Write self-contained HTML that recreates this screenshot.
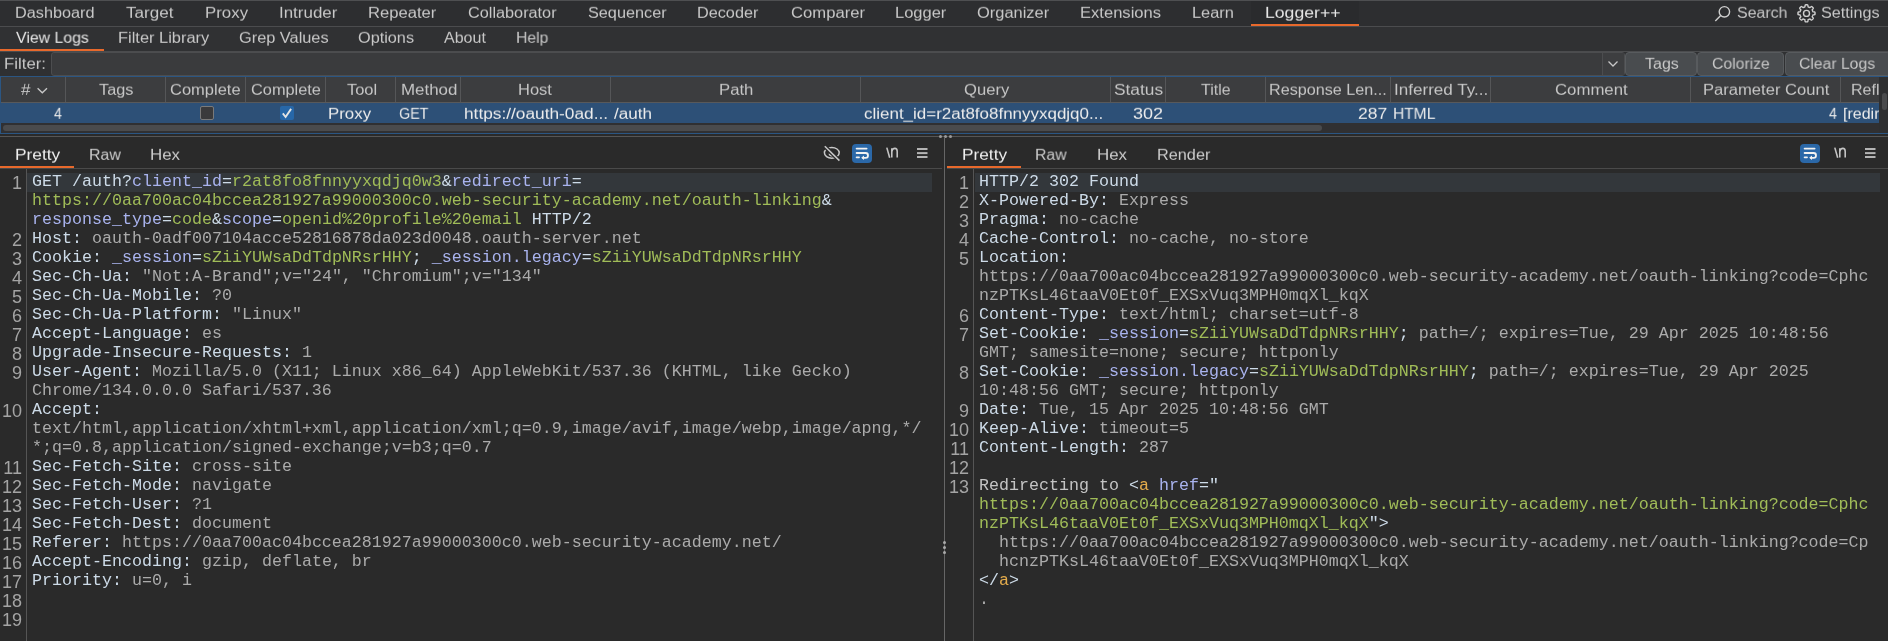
<!DOCTYPE html>
<html><head><meta charset="utf-8">
<style>
*{margin:0;padding:0;box-sizing:border-box}
html,body{width:1888px;height:641px;overflow:hidden;background:#2a2a2a}
body{position:relative;font-family:"Liberation Sans",sans-serif}
.a{position:absolute}
.t{position:absolute;white-space:pre;transform-origin:0 0;will-change:transform;font-family:"Liberation Sans",sans-serif}
pre{position:absolute;will-change:transform;font-family:"Liberation Mono",monospace;font-size:16.6667px;line-height:19px;white-space:pre;top:172px}
pre.ln{width:22px;text-align:right;color:#a4a4a4;font-family:"Liberation Sans",sans-serif;font-size:18px;top:173.6px}
</style></head><body>
<!-- top bar -->
<div class="a" style="left:0;top:0;width:1888px;height:1px;background:#4e4f51"></div>
<div class="a" style="left:0;top:1px;width:1888px;height:25px;background:#2d2e30"></div>
<div class="a" style="left:1251px;top:1px;width:108px;height:25px;background:#2a2b2d"></div>
<div class="a" style="left:1251px;top:24px;width:108px;height:2px;background:#e8692c"></div>
<div class="a" style="left:0;top:26px;width:1888px;height:1px;background:#4b4c4e"></div>
<!-- second bar -->
<div class="a" style="left:0;top:27px;width:1888px;height:24px;background:#303133"></div>
<div class="a" style="left:0;top:49px;width:104px;height:2px;background:#e8692c"></div>
<div class="a" style="left:0;top:51px;width:1888px;height:1px;background:#4b4c4e"></div>
<!-- filter row -->
<div class="a" style="left:0;top:52px;width:1888px;height:24px;background:#2f3032"></div>
<div class="a" style="left:51px;top:52px;width:1574px;height:24px;background:#3a3b3d;border:1px solid #4c4d4f;border-radius:3px"></div>
<div class="a" style="left:1602px;top:53px;width:1px;height:22px;background:#4c4d4f"></div>
<div class="a" style="left:1603px;top:53px;width:21px;height:22px;background:#3d3e40"></div>
<svg class="a" style="left:1606px;top:59px" width="14" height="10" viewBox="0 0 14 10"><path d="M2.5 2.5 L7 7 L11.5 2.5" fill="none" stroke="#c8c8c8" stroke-width="1.3"/></svg>
<div class="a" style="left:1625px;top:52px;width:72px;height:24px;background:#494c4f;border:1px solid #585b5e;border-radius:4px"></div>
<div class="a" style="left:1697px;top:52px;width:87px;height:24px;background:#494c4f;border:1px solid #585b5e;border-radius:4px"></div>
<div class="a" style="left:1785px;top:52px;width:106px;height:24px;background:#494c4f;border:1px solid #585b5e;border-radius:4px"></div>
<!-- table -->
<div class="a" style="left:0;top:76px;width:1888px;height:58px;background:#303032;border:1px solid #2b5683;border-right:none"></div>
<div class="a" style="left:1px;top:77px;width:1878px;height:25px;background:#3c3d3f"></div>
<div class="a" style="left:1px;top:102px;width:1878px;height:1px;background:#58595b"></div>
<div class="a" style="left:65px;top:77px;width:1px;height:25px;background:#555658"></div><div class="a" style="left:165px;top:77px;width:1px;height:25px;background:#555658"></div><div class="a" style="left:245px;top:77px;width:1px;height:25px;background:#555658"></div><div class="a" style="left:325px;top:77px;width:1px;height:25px;background:#555658"></div><div class="a" style="left:395px;top:77px;width:1px;height:25px;background:#555658"></div><div class="a" style="left:460px;top:77px;width:1px;height:25px;background:#555658"></div><div class="a" style="left:610px;top:77px;width:1px;height:25px;background:#555658"></div><div class="a" style="left:860px;top:77px;width:1px;height:25px;background:#555658"></div><div class="a" style="left:1110px;top:77px;width:1px;height:25px;background:#555658"></div><div class="a" style="left:1165px;top:77px;width:1px;height:25px;background:#555658"></div><div class="a" style="left:1265px;top:77px;width:1px;height:25px;background:#555658"></div><div class="a" style="left:1390px;top:77px;width:1px;height:25px;background:#555658"></div><div class="a" style="left:1490px;top:77px;width:1px;height:25px;background:#555658"></div><div class="a" style="left:1690px;top:77px;width:1px;height:25px;background:#555658"></div><div class="a" style="left:1840px;top:77px;width:1px;height:25px;background:#555658"></div>
<svg class="a" style="left:36px;top:85px" width="13" height="10" viewBox="0 0 13 10"><path d="M1.6 3.2 L6.3 7.8 L11 3.2" fill="none" stroke="#c8c8c8" stroke-width="1.3"/></svg>
<div class="a" style="left:0;top:103px;width:1879px;height:20px;background:#2d5077"></div>
<div class="a" style="left:200px;top:106px;width:14px;height:14px;background:#3a3a3c;border:1px solid #7a7a7a;border-radius:2px"></div>
<div class="a" style="left:280px;top:106px;width:14px;height:14px;background:#2767a8;border-radius:2px"></div>
<svg class="a" style="left:280px;top:106px" width="14" height="14" viewBox="0 0 14 14"><path d="M2.8 7.4 L5.6 11 L11.1 2.9" fill="none" stroke="#e4e4e4" stroke-width="1.9"/></svg>
<div class="a" style="left:3px;top:125px;width:1319px;height:6px;background:#4a4b4d;border-radius:3px"></div>
<div class="a" style="left:1879px;top:77px;width:9px;height:56px;background:#2e2f31"></div>
<div class="a" style="left:1882px;top:93px;width:5px;height:17px;background:#4a4b4d;border-radius:3px"></div>
<!-- row clip for Refl / [redi -->
<div class="t" style="left:14.88px;top:3.80px;color:#c8c8c8;font-size:16px;line-height:20px;transform:scale(1.0160,0.92)">Dashboard</div>
<div class="t" style="left:126.00px;top:3.80px;color:#c8c8c8;font-size:16px;line-height:20px;transform:scale(1.0666,0.92)">Target</div>
<div class="t" style="left:204.95px;top:3.80px;color:#c8c8c8;font-size:16px;line-height:20px;transform:scale(1.0527,0.92)">Proxy</div>
<div class="t" style="left:278.94px;top:3.80px;color:#c8c8c8;font-size:16px;line-height:20px;transform:scale(1.0585,0.92)">Intruder</div>
<div class="t" style="left:367.96px;top:3.80px;color:#c8c8c8;font-size:16px;line-height:20px;transform:scale(1.0385,0.92)">Repeater</div>
<div class="t" style="left:467.84px;top:3.80px;color:#c8c8c8;font-size:16px;line-height:20px;transform:scale(1.0162,0.92)">Collaborator</div>
<div class="t" style="left:587.66px;top:3.80px;color:#c8c8c8;font-size:16px;line-height:20px;transform:scale(1.0153,0.92)">Sequencer</div>
<div class="t" style="left:697.17px;top:3.80px;color:#c8c8c8;font-size:16px;line-height:20px;transform:scale(1.0142,0.92)">Decoder</div>
<div class="t" style="left:790.92px;top:3.80px;color:#c8c8c8;font-size:16px;line-height:20px;transform:scale(1.0400,0.92)">Comparer</div>
<div class="t" style="left:894.79px;top:3.80px;color:#c8c8c8;font-size:16px;line-height:20px;transform:scale(1.0309,0.92)">Logger</div>
<div class="t" style="left:977.38px;top:3.80px;color:#c8c8c8;font-size:16px;line-height:20px;transform:scale(1.0272,0.92)">Organizer</div>
<div class="t" style="left:1079.96px;top:3.80px;color:#c8c8c8;font-size:16px;line-height:20px;transform:scale(1.0354,0.92)">Extensions</div>
<div class="t" style="left:1191.97px;top:3.80px;color:#c8c8c8;font-size:16px;line-height:20px;transform:scale(1.0252,0.92)">Learn</div>
<div class="t" style="left:1264.90px;top:3.80px;color:#e6e6e6;font-size:16px;line-height:20px;transform:scale(1.1018,0.92)">Logger++</div>
<div class="t" style="left:1736.50px;top:3.80px;color:#c8c8c8;font-size:16px;line-height:20px;transform:scale(0.9940,0.92)">Search</div>
<div class="t" style="left:1820.50px;top:3.80px;color:#c8c8c8;font-size:16px;line-height:20px;transform:scale(1.0119,0.92)">Settings</div>
<div class="t" style="left:15.72px;top:28.70px;color:#e6e6e6;font-size:16px;line-height:20px;transform:scale(0.9901,0.92)">View Logs</div>
<div class="t" style="left:118.33px;top:28.70px;color:#c8c8c8;font-size:16px;line-height:20px;transform:scale(1.0261,0.92)">Filter Library</div>
<div class="t" style="left:238.56px;top:28.70px;color:#c8c8c8;font-size:16px;line-height:20px;transform:scale(1.0213,0.92)">Grep Values</div>
<div class="t" style="left:357.56px;top:28.70px;color:#c8c8c8;font-size:16px;line-height:20px;transform:scale(1.0159,0.92)">Options</div>
<div class="t" style="left:443.64px;top:28.70px;color:#c8c8c8;font-size:16px;line-height:20px;transform:scale(1.0008,0.92)">About</div>
<div class="t" style="left:516.02px;top:28.70px;color:#c8c8c8;font-size:16px;line-height:20px;transform:scale(0.9811,0.92)">Help</div>
<div class="t" style="left:4.49px;top:55.00px;color:#c8c8c8;font-size:16px;line-height:20px;transform:scale(1.0492,0.92)">Filter:</div>
<div class="t" style="left:1644.54px;top:54.90px;color:#c8c8c8;font-size:16px;line-height:20px;transform:scale(1.0001,0.92)">Tags</div>
<div class="t" style="left:1711.92px;top:54.90px;color:#c8c8c8;font-size:16px;line-height:20px;transform:scale(0.9843,0.92)">Colorize</div>
<div class="t" style="left:1798.92px;top:54.90px;color:#c8c8c8;font-size:16px;line-height:20px;transform:scale(0.9824,0.92)">Clear Logs</div>
<div class="t" style="left:21.20px;top:81.00px;color:#c6c6c6;font-size:16px;line-height:20px;transform:scale(1.0667,0.92)">#</div>
<div class="t" style="left:99.36px;top:81.00px;color:#c6c6c6;font-size:16px;line-height:20px;transform:scale(1.0179,0.92)">Tags</div>
<div class="t" style="left:170.30px;top:81.00px;color:#c6c6c6;font-size:16px;line-height:20px;transform:scale(1.0302,0.92)">Complete</div>
<div class="t" style="left:250.66px;top:81.00px;color:#c6c6c6;font-size:16px;line-height:20px;transform:scale(1.0212,0.92)">Complete</div>
<div class="t" style="left:346.54px;top:81.00px;color:#c6c6c6;font-size:16px;line-height:20px;transform:scale(1.0280,0.92)">Tool</div>
<div class="t" style="left:400.66px;top:81.00px;color:#c6c6c6;font-size:16px;line-height:20px;transform:scale(1.0570,0.92)">Method</div>
<div class="t" style="left:518.33px;top:81.00px;color:#c6c6c6;font-size:16px;line-height:20px;transform:scale(1.0296,0.92)">Host</div>
<div class="t" style="left:719.32px;top:81.00px;color:#c6c6c6;font-size:16px;line-height:20px;transform:scale(1.0447,0.92)">Path</div>
<div class="t" style="left:963.56px;top:81.00px;color:#c6c6c6;font-size:16px;line-height:20px;transform:scale(1.0380,0.92)">Query</div>
<div class="t" style="left:1113.56px;top:81.00px;color:#c6c6c6;font-size:16px;line-height:20px;transform:scale(1.0813,0.92)">Status</div>
<div class="t" style="left:1201.00px;top:81.00px;color:#c6c6c6;font-size:16px;line-height:20px;transform:scale(0.9956,0.92)">Title</div>
<div class="t" style="left:1268.63px;top:81.00px;color:#c6c6c6;font-size:16px;line-height:20px;transform:scale(1.0098,0.92)">Response Len...</div>
<div class="t" style="left:1394.47px;top:81.00px;color:#c6c6c6;font-size:16px;line-height:20px;transform:scale(1.0676,0.92)">Inferred Ty...</div>
<div class="t" style="left:1554.92px;top:81.00px;color:#c6c6c6;font-size:16px;line-height:20px;transform:scale(1.0476,0.92)">Comment</div>
<div class="t" style="left:1702.50px;top:81.00px;color:#c6c6c6;font-size:16px;line-height:20px;transform:scale(1.0364,0.92)">Parameter Count</div>
<div class="t" style="left:53.82px;top:104.50px;color:#ececec;font-size:16px;line-height:20px;transform:scale(0.8889,0.92)">4</div>
<div class="t" style="left:328.49px;top:104.50px;color:#ececec;font-size:16px;line-height:20px;transform:scale(1.0528,0.92)">Proxy</div>
<div class="t" style="left:398.66px;top:104.50px;color:#ececec;font-size:16px;line-height:20px;transform:scale(0.8945,0.92)">GET</div>
<div class="t" style="left:463.64px;top:104.50px;color:#ececec;font-size:16px;line-height:20px;transform:scale(1.0796,0.92)">https://oauth-0ad...</div>
<div class="t" style="left:614.00px;top:104.50px;color:#ececec;font-size:16px;line-height:20px;transform:scale(1.0669,0.92)">/auth</div>
<div class="t" style="left:864.28px;top:104.50px;color:#ececec;font-size:16px;line-height:20px;transform:scale(1.0605,0.92)">client_id=r2at8fo8fnnyyxqdjq0...</div>
<div class="t" style="left:1132.66px;top:104.50px;color:#ececec;font-size:16px;line-height:20px;transform:scale(1.1253,0.92)">302</div>
<div class="t" style="left:1357.84px;top:104.50px;color:#ececec;font-size:16px;line-height:20px;transform:scale(1.0934,0.92)">287</div>
<div class="t" style="left:1392.85px;top:104.50px;color:#ececec;font-size:16px;line-height:20px;transform:scale(0.9708,0.92)">HTML</div>
<div class="t" style="left:1829.00px;top:104.50px;color:#ececec;font-size:16px;line-height:20px;transform:scale(0.8889,0.92)">4</div>
<div class="t" style="left:14.64px;top:146.20px;color:#f0f0f0;font-size:16px;line-height:20px;transform:scale(1.0838,0.92)">Pretty</div>
<div class="t" style="left:88.73px;top:146.20px;color:#cccccc;font-size:16px;line-height:20px;transform:scale(0.9923,0.92)">Raw</div>
<div class="t" style="left:149.94px;top:146.20px;color:#cccccc;font-size:16px;line-height:20px;transform:scale(1.0563,0.92)">Hex</div>
<div class="t" style="left:961.82px;top:146.20px;color:#f0f0f0;font-size:16px;line-height:20px;transform:scale(1.0789,0.92)">Pretty</div>
<div class="t" style="left:1035.01px;top:146.20px;color:#cccccc;font-size:16px;line-height:20px;transform:scale(0.9856,0.92)">Raw</div>
<div class="t" style="left:1096.94px;top:146.20px;color:#cccccc;font-size:16px;line-height:20px;transform:scale(1.0563,0.92)">Hex</div>
<div class="t" style="left:1156.98px;top:146.20px;color:#cccccc;font-size:16px;line-height:20px;transform:scale(1.0167,0.92)">Render</div>
<div class="a" style="left:1844px;top:103px;width:35px;height:20px;overflow:hidden"><div class="t" style="left:-1px;top:1.5px;color:#ececec;font-size:16px;line-height:20px;transform:scale(1,0.92)">[redirect</div></div>
<div class="a" style="left:1852px;top:77px;width:27px;height:25px;overflow:hidden"><div class="t" style="left:-1.3px;top:4px;color:#c6c6c6;font-size:16px;line-height:20px;transform:scale(1,0.92)">Reflections</div></div>
<!-- splitter -->
<div class="a" style="left:0;top:136px;width:1888px;height:1px;background:#565656"></div>
<div class="a" style="left:939px;top:135px;width:3px;height:3px;border-radius:2px;background:#9a9a9a"></div>
<div class="a" style="left:944px;top:135px;width:3px;height:3px;border-radius:2px;background:#9a9a9a"></div>
<div class="a" style="left:949px;top:135px;width:3px;height:3px;border-radius:2px;background:#9a9a9a"></div>
<div class="a" style="left:944px;top:137px;width:1px;height:504px;background:#666"></div>
<div class="a" style="left:943px;top:541px;width:3px;height:3px;border-radius:2px;background:#aaa"></div>
<div class="a" style="left:943px;top:546px;width:3px;height:3px;border-radius:2px;background:#aaa"></div>
<div class="a" style="left:943px;top:551px;width:3px;height:3px;border-radius:2px;background:#aaa"></div>
<!-- left editor -->
<div class="a" style="left:0;top:166px;width:74px;height:2px;background:#e8692c"></div>
<div class="a" style="left:0;top:168px;width:942px;height:1px;background:#4a4a4a"></div>
<div class="a" style="left:26px;top:169px;width:1px;height:472px;background:#555"></div>
<div class="a" style="left:27px;top:173px;width:905px;height:19px;background:#33373b"></div>
<!-- right editor -->
<div class="a" style="left:947px;top:166px;width:74px;height:2px;background:#e8692c"></div>
<div class="a" style="left:947px;top:168px;width:941px;height:1px;background:#4a4a4a"></div>
<div class="a" style="left:973px;top:169px;width:1px;height:472px;background:#555"></div>
<div class="a" style="left:975px;top:173px;width:905px;height:19px;background:#33373b"></div>
<pre class="ln" style="left:0px">1


2
3
4
5
6
7
8
9

10


11
12
13
14
15
16
17
18
19</pre><pre class="code" style="left:32px"><span style="color:#cddbe8">GET /auth?</span><span style="color:#a9b3ee">client_id</span><span style="color:#cddbe8">=</span><span style="color:#a0bc58">r2at8fo8fnnyyxqdjq0w3</span><span style="color:#cddbe8">&amp;</span><span style="color:#a9b3ee">redirect_uri</span><span style="color:#cddbe8">=</span>
<span style="color:#a0bc58">https://0aa700ac04bccea281927a99000300c0.web-security-academy.net/oauth-linking</span><span style="color:#cddbe8">&amp;</span>
<span style="color:#a9b3ee">response_type</span><span style="color:#cddbe8">=</span><span style="color:#a0bc58">code</span><span style="color:#cddbe8">&amp;</span><span style="color:#a9b3ee">scope</span><span style="color:#cddbe8">=</span><span style="color:#a0bc58">openid%20profile%20email</span><span style="color:#cddbe8"> HTTP/2</span>
<span style="color:#cddbe8">Host:</span><span style="color:#ababab"> oauth-0adf007104acce52816878da023d0048.oauth-server.net</span>
<span style="color:#cddbe8">Cookie:</span><span style="color:#ababab"> </span><span style="color:#a9b3ee">_session</span><span style="color:#cddbe8">=</span><span style="color:#a0bc58">sZiiYUWsaDdTdpNRsrHHY</span><span style="color:#cddbe8">; </span><span style="color:#a9b3ee">_session.legacy</span><span style="color:#cddbe8">=</span><span style="color:#a0bc58">sZiiYUWsaDdTdpNRsrHHY</span>
<span style="color:#cddbe8">Sec-Ch-Ua:</span><span style="color:#ababab"> &quot;Not:A-Brand&quot;;v=&quot;24&quot;, &quot;Chromium&quot;;v=&quot;134&quot;</span>
<span style="color:#cddbe8">Sec-Ch-Ua-Mobile:</span><span style="color:#ababab"> ?0</span>
<span style="color:#cddbe8">Sec-Ch-Ua-Platform:</span><span style="color:#ababab"> &quot;Linux&quot;</span>
<span style="color:#cddbe8">Accept-Language:</span><span style="color:#ababab"> es</span>
<span style="color:#cddbe8">Upgrade-Insecure-Requests:</span><span style="color:#ababab"> 1</span>
<span style="color:#cddbe8">User-Agent:</span><span style="color:#ababab"> Mozilla/5.0 (X11; Linux x86_64) AppleWebKit/537.36 (KHTML, like Gecko)</span>
<span style="color:#ababab">Chrome/134.0.0.0 Safari/537.36</span>
<span style="color:#cddbe8">Accept:</span>
<span style="color:#ababab">text/html,application/xhtml+xml,application/xml;q=0.9,image/avif,image/webp,image/apng,*/</span>
<span style="color:#ababab">*;q=0.8,application/signed-exchange;v=b3;q=0.7</span>
<span style="color:#cddbe8">Sec-Fetch-Site:</span><span style="color:#ababab"> cross-site</span>
<span style="color:#cddbe8">Sec-Fetch-Mode:</span><span style="color:#ababab"> navigate</span>
<span style="color:#cddbe8">Sec-Fetch-User:</span><span style="color:#ababab"> ?1</span>
<span style="color:#cddbe8">Sec-Fetch-Dest:</span><span style="color:#ababab"> document</span>
<span style="color:#cddbe8">Referer:</span><span style="color:#ababab"> https://0aa700ac04bccea281927a99000300c0.web-security-academy.net/</span>
<span style="color:#cddbe8">Accept-Encoding:</span><span style="color:#ababab"> gzip, deflate, br</span>
<span style="color:#cddbe8">Priority:</span><span style="color:#ababab"> u=0, i</span>

</pre>
<pre class="ln" style="left:947px">1
2
3
4
5


6
7

8

9
10
11
12
13





</pre><pre class="code" style="left:979px"><span style="color:#cddbe8">HTTP/2 302 Found</span>
<span style="color:#cddbe8">X-Powered-By:</span><span style="color:#ababab"> Express</span>
<span style="color:#cddbe8">Pragma:</span><span style="color:#ababab"> no-cache</span>
<span style="color:#cddbe8">Cache-Control:</span><span style="color:#ababab"> no-cache, no-store</span>
<span style="color:#cddbe8">Location:</span>
<span style="color:#ababab">https://0aa700ac04bccea281927a99000300c0.web-security-academy.net/oauth-linking?code=Cphc</span>
<span style="color:#ababab">nzPTKsL46taaV0Et0f_EXSxVuq3MPH0mqXl_kqX</span>
<span style="color:#cddbe8">Content-Type:</span><span style="color:#ababab"> text/html; charset=utf-8</span>
<span style="color:#cddbe8">Set-Cookie:</span><span style="color:#ababab"> </span><span style="color:#a9b3ee">_session</span><span style="color:#cddbe8">=</span><span style="color:#a0bc58">sZiiYUWsaDdTdpNRsrHHY</span><span style="color:#cddbe8">;</span><span style="color:#ababab"> path=/; expires=Tue, 29 Apr 2025 10:48:56</span>
<span style="color:#ababab">GMT; samesite=none; secure; httponly</span>
<span style="color:#cddbe8">Set-Cookie:</span><span style="color:#ababab"> </span><span style="color:#a9b3ee">_session.legacy</span><span style="color:#cddbe8">=</span><span style="color:#a0bc58">sZiiYUWsaDdTdpNRsrHHY</span><span style="color:#cddbe8">;</span><span style="color:#ababab"> path=/; expires=Tue, 29 Apr 2025</span>
<span style="color:#ababab">10:48:56 GMT; secure; httponly</span>
<span style="color:#cddbe8">Date:</span><span style="color:#ababab"> Tue, 15 Apr 2025 10:48:56 GMT</span>
<span style="color:#cddbe8">Keep-Alive:</span><span style="color:#ababab"> timeout=5</span>
<span style="color:#cddbe8">Content-Length:</span><span style="color:#ababab"> 287</span>

<span style="color:#c4c4c4">Redirecting to </span><span style="color:#cddbe8">&lt;</span><span style="color:#e4ac4c">a</span><span style="color:#cddbe8"> </span><span style="color:#a9b3ee">href</span><span style="color:#cddbe8">=&quot;</span>
<span style="color:#a0bc58">https://0aa700ac04bccea281927a99000300c0.web-security-academy.net/oauth-linking?code=Cphc</span>
<span style="color:#a0bc58">nzPTKsL46taaV0Et0f_EXSxVuq3MPH0mqXl_kqX</span><span style="color:#cddbe8">&quot;&gt;</span>
<span style="color:#ababab">  https://0aa700ac04bccea281927a99000300c0.web-security-academy.net/oauth-linking?code=Cp</span>
<span style="color:#ababab">  hcnzPTKsL46taaV0Et0f_EXSxVuq3MPH0mqXl_kqX</span>
<span style="color:#cddbe8">&lt;/</span><span style="color:#e4ac4c">a</span><span style="color:#cddbe8">&gt;</span>
<span style="color:#ababab">.</span></pre>
<!-- icons -->
<svg class="a" style="left:1712px;top:3px" width="22" height="21" viewBox="0 0 22 21"><g fill="none" stroke="#cfcfcf" stroke-width="1.4">
<circle cx="12.4" cy="8.8" r="5.2"/><path d="M8.7 12.6 L3.3 18"/></g></svg>
<svg class="a" style="left:0;top:0" width="1888" height="30" viewBox="0 0 1888 30"><path d="M1815.05 13.30 L1815.04 13.64 L1815.02 13.97 L1814.97 14.30 L1814.79 14.61 L1813.90 14.77 L1813.02 14.87 L1812.82 15.08 L1812.73 15.32 L1812.65 15.57 L1812.55 15.81 L1812.45 16.04 L1812.34 16.27 L1812.23 16.51 L1812.22 16.80 L1812.78 17.49 L1813.29 18.23 L1813.20 18.58 L1813.00 18.85 L1812.78 19.10 L1812.55 19.35 L1812.30 19.58 L1812.05 19.80 L1811.78 20.00 L1811.43 20.09 L1810.69 19.58 L1810.00 19.02 L1809.71 19.03 L1809.47 19.14 L1809.24 19.25 L1809.01 19.35 L1808.77 19.45 L1808.52 19.53 L1808.28 19.62 L1808.07 19.82 L1807.97 20.70 L1807.81 21.59 L1807.50 21.77 L1807.17 21.82 L1806.84 21.84 L1806.50 21.85 L1806.16 21.84 L1805.83 21.82 L1805.50 21.77 L1805.19 21.59 L1805.03 20.70 L1804.93 19.82 L1804.72 19.62 L1804.48 19.53 L1804.23 19.45 L1803.99 19.35 L1803.76 19.25 L1803.53 19.14 L1803.29 19.03 L1803.00 19.02 L1802.31 19.58 L1801.57 20.09 L1801.22 20.00 L1800.95 19.80 L1800.70 19.58 L1800.45 19.35 L1800.22 19.10 L1800.00 18.85 L1799.80 18.58 L1799.71 18.23 L1800.22 17.49 L1800.78 16.80 L1800.77 16.51 L1800.66 16.27 L1800.55 16.04 L1800.45 15.81 L1800.35 15.57 L1800.27 15.32 L1800.18 15.08 L1799.98 14.87 L1799.10 14.77 L1798.21 14.61 L1798.03 14.30 L1797.98 13.97 L1797.96 13.64 L1797.95 13.30 L1797.96 12.96 L1797.98 12.63 L1798.03 12.30 L1798.21 11.99 L1799.10 11.83 L1799.98 11.73 L1800.18 11.52 L1800.27 11.28 L1800.35 11.03 L1800.45 10.79 L1800.55 10.56 L1800.66 10.33 L1800.77 10.09 L1800.78 9.80 L1800.22 9.11 L1799.71 8.37 L1799.80 8.02 L1800.00 7.75 L1800.22 7.50 L1800.45 7.25 L1800.70 7.02 L1800.95 6.80 L1801.22 6.60 L1801.57 6.51 L1802.31 7.02 L1803.00 7.58 L1803.29 7.57 L1803.53 7.46 L1803.76 7.35 L1803.99 7.25 L1804.23 7.15 L1804.48 7.07 L1804.72 6.98 L1804.93 6.78 L1805.03 5.90 L1805.19 5.01 L1805.50 4.83 L1805.83 4.78 L1806.16 4.76 L1806.50 4.75 L1806.84 4.76 L1807.17 4.78 L1807.50 4.83 L1807.81 5.01 L1807.97 5.90 L1808.07 6.78 L1808.28 6.98 L1808.52 7.07 L1808.77 7.15 L1809.01 7.25 L1809.24 7.35 L1809.47 7.46 L1809.71 7.57 L1810.00 7.58 L1810.69 7.02 L1811.43 6.51 L1811.78 6.60 L1812.05 6.80 L1812.30 7.02 L1812.55 7.25 L1812.78 7.50 L1813.00 7.75 L1813.20 8.02 L1813.29 8.37 L1812.78 9.11 L1812.22 9.80 L1812.23 10.09 L1812.34 10.33 L1812.45 10.56 L1812.55 10.79 L1812.65 11.03 L1812.73 11.28 L1812.82 11.52 L1813.02 11.73 L1813.90 11.83 L1814.79 11.99 L1814.97 12.30 L1815.02 12.63 L1815.04 12.96Z" fill="none" stroke="#cfcfcf" stroke-width="1.4" stroke-linejoin="round"/><circle cx="1806.5" cy="13.4" r="3.0" fill="none" stroke="#cfcfcf" stroke-width="1.4"/></svg>
<svg class="a" style="left:820px;top:142px" width="24" height="22" viewBox="0 0 24 22"><g fill="none" stroke-width="1.5">
<ellipse cx="11.8" cy="10.8" rx="7.4" ry="5.4" stroke="#c8c8c8"/><path d="M9.3 11.6 A2.4 2.4 0 0 0 13.6 12.6" stroke="#c8c8c8" stroke-width="1.8"/>
<path d="M4.8 4.3 L19.4 18.6" stroke="#2a2a2a" stroke-width="4"/><path d="M4.8 4.3 L19.4 18.6" stroke="#c8c8c8"/></g></svg>
<div class="a" style="left:852px;top:144px;width:20px;height:19px;background:#2b68a8;border-radius:4px"></div>
<svg class="a" style="left:852px;top:144px" width="20" height="19" viewBox="0 0 20 19"><g fill="none" stroke="#f2f2f2" stroke-width="1.8" stroke-linecap="round">
<path d="M4.6 4.6 H14.6"/><path d="M4.6 9 H13.6 A2.4 2.4 0 0 1 13.6 13.8 H11"/><path d="M4.6 13.3 H7"/></g>
<path d="M9.2 13.8 L12 11.6 L12 16 Z" fill="#f2f2f2"/></svg>
<svg class="a" style="left:885px;top:145px" width="14" height="15" viewBox="0 0 14 15"><g fill="none" stroke="#c4c4c4" stroke-width="1.6">
<path d="M1.8 2.6 L4.7 12.8"/><path d="M6.8 3.3 V12.6"/><path d="M6.8 6.2 Q7.6 3.4 9.9 3.4 Q12.2 3.4 12.2 6.4 V12.6"/></g></svg>
<svg class="a" style="left:917px;top:145px" width="12" height="15" viewBox="0 0 12 15"><g stroke="#b4b4b4" stroke-width="2">
<path d="M0 4 H10.5"/><path d="M0 8.1 H10.5"/><path d="M0 12 H10.5"/></g></svg>
<div class="a" style="left:1800px;top:144px;width:20px;height:19px;background:#2b68a8;border-radius:4px"></div>
<svg class="a" style="left:1800px;top:144px" width="20" height="19" viewBox="0 0 20 19"><g fill="none" stroke="#f2f2f2" stroke-width="1.8" stroke-linecap="round">
<path d="M4.6 4.6 H14.6"/><path d="M4.6 9 H13.6 A2.4 2.4 0 0 1 13.6 13.8 H11"/><path d="M4.6 13.3 H7"/></g>
<path d="M9.2 13.8 L12 11.6 L12 16 Z" fill="#f2f2f2"/></svg>
<svg class="a" style="left:1833px;top:145px" width="14" height="15" viewBox="0 0 14 15"><g fill="none" stroke="#c4c4c4" stroke-width="1.6">
<path d="M1.8 2.6 L4.7 12.8"/><path d="M6.8 3.3 V12.6"/><path d="M6.8 6.2 Q7.6 3.4 9.9 3.4 Q12.2 3.4 12.2 6.4 V12.6"/></g></svg>
<svg class="a" style="left:1865px;top:145px" width="12" height="15" viewBox="0 0 12 15"><g stroke="#b4b4b4" stroke-width="2">
<path d="M0 4 H10.5"/><path d="M0 8.1 H10.5"/><path d="M0 12 H10.5"/></g></svg>

</body></html>
